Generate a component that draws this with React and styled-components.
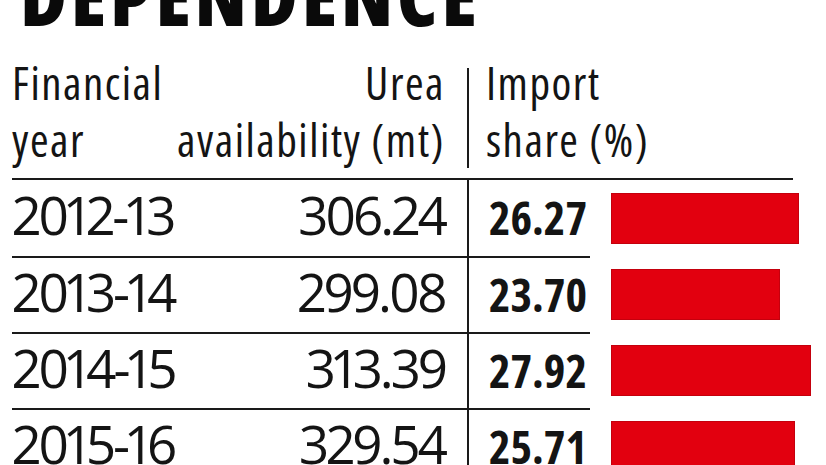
import styled, { createGlobalStyle } from "styled-components";

const GlobalStyle = createGlobalStyle`
  html, body {
    margin: 0;
    background: #fff;
    overflow: hidden;
  }
  body {
    font-family: "Open Sans", "DejaVu Sans", sans-serif;
    color: #141414;
  }
`;

const Page = styled.div`
  width: 826px;
  height: 465px;
  overflow: hidden;
  padding-left: 12px;
  box-sizing: border-box;
`;

const Title = styled.h1`
  margin: -45px 0 0 8px;
  font-size: 80px;
  line-height: 80px;
  font-weight: 800;
  font-stretch: 75%;
  letter-spacing: 3.8px;
  color: #0a0a0a;
`;

const HEAD_COLUMNS = "163px 292px 326px";
const BODY_COLUMNS = "163px 292px 123px 1fr";

const HeaderRow = styled.div`
  display: grid;
  grid-template-columns: ${HEAD_COLUMNS};
  width: 781px;
  margin-top: 33px;
  padding-bottom: 10px;
  border-bottom: 2px solid #1a1a1a;
`;

const HeadCell = styled.div`
  text-align: ${(p) => p.$align || "left"};
  padding-right: ${(p) => p.$pr || 0}px;
  padding-left: ${(p) => p.$pl || 0}px;
  border-left: ${(p) => (p.$divider ? "2px solid #1a1a1a" : "none")};
`;

const HeadText = styled.div`
  margin-top: -14px;
  font-size: 45px;
  line-height: 57px;
  font-stretch: 75%;
  font-weight: 400;
  letter-spacing: 1.5px;
  white-space: nowrap;
`;

const BodyRow = styled.div`
  display: grid;
  grid-template-columns: ${BODY_COLUMNS};
  height: 76px;
`;

const Cell = styled.div`
  display: flex;
  align-items: center;
  justify-content: ${(p) => (p.$align === "right" ? "flex-end" : "flex-start")};
  box-sizing: border-box;
  border-top: ${(p) => (p.$line ? "2px solid #1a1a1a" : "none")};
  border-left: ${(p) => (p.$divider ? "2px solid #1a1a1a" : "none")};
  padding-right: ${(p) => p.$pr || 0}px;
  padding-left: ${(p) => p.$pl || 0}px;
  white-space: nowrap;
`;

const Figure = styled.span`
  font-size: 53px;
  font-weight: 380;
  font-variant-numeric: proportional-nums;
  letter-spacing: -3px;
  line-height: 1;
  margin-bottom: 7px;
`;

const Share = styled.span`
  font-size: 46px;
  font-weight: 700;
  font-stretch: 75%;
  line-height: 1;
  margin-bottom: 2px;
`;

const Bar = styled.div`
  height: 51px;
  background: #e2000f;
  box-shadow: inset 0 0 0 1px #c4000d;
`;

const rows = [
  { year: "2012-13", urea: "306.24", share: 26.27 },
  { year: "2013-14", urea: "299.08", share: 23.7 },
  { year: "2014-15", urea: "313.39", share: 27.92 },
  { year: "2015-16", urea: "329.54", share: 25.71 },
];

const PX_PER_POINT = 7.15;

export default function App() {
  return (
    <Page>
      <GlobalStyle />
      <Title>DEPENDENCE</Title>
      <HeaderRow>
        <HeadCell>
          <HeadText>
            Financial
            <br />
            year
          </HeadText>
        </HeadCell>
        <HeadCell $align="right" $pr={22}>
          <HeadText>
            Urea
            <br />
            availability (mt)
          </HeadText>
        </HeadCell>
        <HeadCell $divider $pl={17}>
          <HeadText>
            Import
            <br />
            share (%)
          </HeadText>
        </HeadCell>
      </HeaderRow>
      {rows.map((r, i) => (
        <BodyRow key={r.year}>
          <Cell $line={i > 0}>
            <Figure>{r.year}</Figure>
          </Cell>
          <Cell $line={i > 0} $align="right" $pr={22}>
            <Figure>{r.urea}</Figure>
          </Cell>
          <Cell $line={i > 0} $divider $align="right" $pr={3}>
            <Share>{r.share.toFixed(2)}</Share>
          </Cell>
          <Cell $pl={21}>
            <Bar style={{ width: `${r.share * PX_PER_POINT}px` }} />
          </Cell>
        </BodyRow>
      ))}
    </Page>
  );
}
